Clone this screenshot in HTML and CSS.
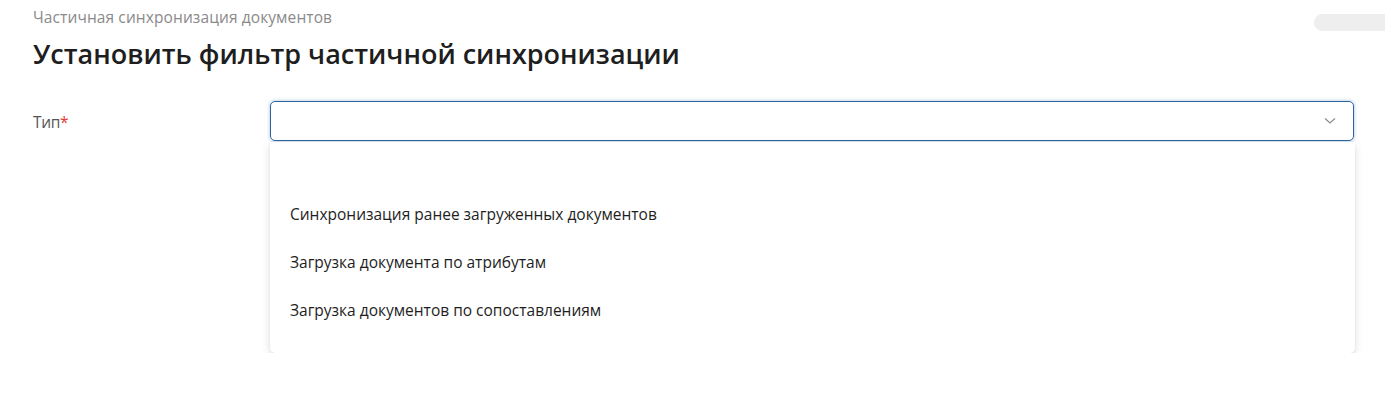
FILE: index.html
```html
<!DOCTYPE html>
<html lang="ru">
<head>
<meta charset="utf-8">
<title>Установить фильтр частичной синхронизации</title>
<link rel="stylesheet" href="styles.css">
</head>
<body>
<div class="page">
  <header class="header">
    <div class="titles">
      <div class="crumb">Частичная синхронизация документов</div>
      <h1 class="title">Установить фильтр частичной синхронизации</h1>
    </div>
    <div class="pill"></div>
  </header>
  <div class="row">
    <label class="label">Тип<span class="req">*</span></label>
    <div class="field">
      <div class="select">
        <svg class="chev" width="12" height="8" viewBox="0 0 12 8"><path d="M1 1.5 L6 6 L11 1.5" fill="none" stroke="#8a8a8a" stroke-width="1.2"/></svg>
      </div>
      <ul class="menu">
        <li class="item empty"></li>
        <li class="item">Синхронизация ранее загруженных документов</li>
        <li class="item">Загрузка документа по атрибутам</li>
        <li class="item">Загрузка документов по сопоставлениям</li>
      </ul>
    </div>
  </div>
</div>
</body>
</html>
```
FILE: styles.css
```css
* { box-sizing: border-box; }
html, body { margin: 0; padding: 0; background: #fff; }
body { font-family: "Open Sans", "Noto Sans", sans-serif; color: #222; }
.page { padding: 9px 0 0 33px; }
.header { display: flex; justify-content: space-between; align-items: flex-start; }
.crumb { font-size: 15.5px; line-height: 16px; color: #8a8a8a; letter-spacing: 0.1px; }
.title { margin: 14px 0 0 0; font-size: 27px; line-height: 30px; font-weight: 600; color: #1e1e1e; }
.pill { width: 80px; height: 17px; margin-top: 5px; margin-right: -9px; background: #eeeeee; border-radius: 9px; }
.row { display: flex; margin-top: 32px; }
.label { width: 237px; font-size: 15.5px; line-height: 20px; color: #555; padding-top: 11px; letter-spacing: -0.3px; }
.req { color: #e53935; }
.field { width: 1085px; }
.select { height: 40px; border: 1.5px solid #2a64a0; border-radius: 5px; box-shadow: 0 0 3px 1px rgba(42,100,160,0.25); display: flex; align-items: center; justify-content: flex-end; padding-right: 17px; margin-right: 1px; }
.chev { display: block; }
.menu { list-style: none; margin: 1px 0 0 0; padding: 0 0 19px 0; background: #fff; border-radius: 0 0 5px 5px; box-shadow: 0 3px 10px rgba(0,0,0,0.12), 0 1px 3px rgba(0,0,0,0.06); }
.item { height: 48px; display: flex; align-items: center; padding-left: 20px; font-size: 15.5px; color: #1e1e1e; }
```
